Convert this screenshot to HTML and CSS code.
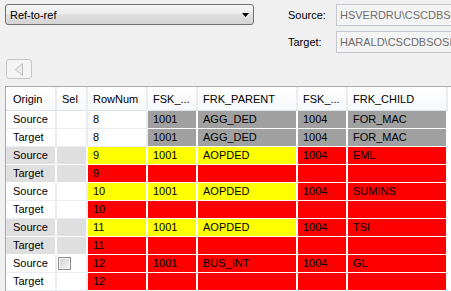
FILE: index.html
```html
<!DOCTYPE html>
<html lang="en">
  <head>
    <meta charset="UTF-8" />
    <title>Compare rows</title>
    <link rel="stylesheet" href="styles.css">
  </head>
  <body>
    <div class="form">
      <!-- Top bar -->
      <div class="top">
        <div class="left">
          <div class="combo">
            <span>Ref-to-ref</span>
            <svg class="arrow" width="7" height="4" viewBox="0 0 7 4"><polygon points="0,0 7,0 3.5,4" fill="#000" /></svg>
          </div>
          <button class="back" disabled>
            <svg width="10" height="13" viewBox="0 0 10 13"><polygon points="8.5,0.5 8.5,12.5 1.5,6.5" fill="#ececec" stroke="#bdbdbd" /></svg>
          </button>
        </div>
        <div class="conn">
          <div class="conn-row">
            <label>Source:</label>
            <div class="textbox">HSVERDRU\CSCDBSOSL</div>
          </div>
          <div class="conn-row">
            <label>Target:</label>
            <div class="textbox">HARALD\CSCDBSOSL</div>
          </div>
        </div>
      </div>

      <!-- Grid -->
      <div class="grid">
        <table>
          <colgroup>
            <col class="c-origin" />
            <col class="c-sel" />
            <col class="c-row" />
            <col class="c-fsk" />
            <col class="c-frk" />
            <col class="c-fsk" />
            <col class="c-frk" />
          </colgroup>
          <thead>
            <tr>
              <th class="origin">Origin</th>
              <th>Sel</th>
              <th>RowNum</th>
              <th>FSK_...</th>
              <th>FRK_PARENT</th>
              <th>FSK_...</th>
              <th>FRK_CHILD</th>
            </tr>
          </thead>
          <tbody>
            <tr>
              <td class="origin">Source</td><td></td><td>8</td>
              <td class="g">1001</td><td class="g">AGG_DED</td><td class="g">1004</td><td class="g">FOR_MAC</td>
            </tr>
            <tr>
              <td class="origin">Target</td><td></td><td>8</td>
              <td class="g">1001</td><td class="g">AGG_DED</td><td class="g">1004</td><td class="g">FOR_MAC</td>
            </tr>
            <tr>
              <td class="origin sh">Source</td><td class="sh"></td><td class="y">9</td>
              <td class="y">1001</td><td class="y">AOPDED</td><td class="r">1004</td><td class="r">EML</td>
            </tr>
            <tr>
              <td class="origin sh">Target</td><td class="sh"></td><td class="r">9</td>
              <td class="r"></td><td class="r"></td><td class="r"></td><td class="r"></td>
            </tr>
            <tr>
              <td class="origin">Source</td><td></td><td class="y">10</td>
              <td class="y">1001</td><td class="y">AOPDED</td><td class="r">1004</td><td class="r">SUMINS</td>
            </tr>
            <tr>
              <td class="origin">Target</td><td></td><td class="r">10</td>
              <td class="r"></td><td class="r"></td><td class="r"></td><td class="r"></td>
            </tr>
            <tr>
              <td class="origin sh">Source</td><td class="sh"></td><td class="y">11</td>
              <td class="y">1001</td><td class="y">AOPDED</td><td class="r">1004</td><td class="r">TSI</td>
            </tr>
            <tr>
              <td class="origin sh">Target</td><td class="sh"></td><td class="r">11</td>
              <td class="r"></td><td class="r"></td><td class="r"></td><td class="r"></td>
            </tr>
            <tr>
              <td class="origin">Source</td><td class="sel"><span class="check"></span></td><td class="r">12</td>
              <td class="r">1001</td><td class="r">BUS_INT</td><td class="r">1004</td><td class="r">GL</td>
            </tr>
            <tr>
              <td class="origin">Target</td><td></td><td class="r">12</td>
              <td class="r"></td><td class="r"></td><td class="r"></td><td class="r"></td>
            </tr>
          </tbody>
        </table>
      </div>
    </div>
  </body>
</html>
```

FILE: styles.css
```css
body {
  margin: 0;
  background-color: #f0f0f0;
  font-family: "Liberation Sans", Arial, sans-serif;
  font-size: 11px;
  color: #000;
  width: 451px;
  height: 291px;
  overflow: hidden;
}

.form {
  padding: 4px 0 0 5px;
}

.top {
  display: flex;
}

.left {
  width: 249px;
  flex-shrink: 0;
}

.combo {
  height: 21px;
  box-sizing: border-box;
  border: 1px solid #707070;
  border-radius: 3px;
  background: linear-gradient(#f4f4f4, #ececec 50%, #e0e0e0 50%, #d4d4d4);
  display: flex;
  align-items: center;
  padding: 0 4px;
}

.combo .arrow {
  margin-left: auto;
}

.back {
  display: flex;
  align-items: center;
  justify-content: center;
  width: 26px;
  height: 20px;
  margin: 34px 0 0 1px;
  padding: 0;
  border: 1px solid #c5c5c5;
  border-radius: 3px;
  background-color: #f4f4f4;
}

.conn {
  margin-left: 34px;
  display: flex;
  flex-direction: column;
  gap: 5px;
}

.conn-row {
  display: flex;
  align-items: center;
}

.conn-row label {
  width: 48px;
  flex-shrink: 0;
}

.textbox {
  width: 115px;
  height: 22px;
  box-sizing: border-box;
  border: 1px solid #c3c6ca;
  border-right: none;
  background-color: #f4f4f4;
  color: #6d6d6d;
  padding-left: 3px;
  line-height: 20px;
  white-space: nowrap;
  overflow: hidden;
}

.grid {
  margin-top: 7px;
  border: 1px solid #a9a9a9;
  border-right: none;
  border-bottom: none;
  background-color: #fff;
  width: 446px;
  height: 204px;
  overflow: hidden;
}

.grid table {
  border-collapse: separate;
  border-spacing: 0;
  table-layout: fixed;
  width: 442px;
}

.c-origin { width: 51px; }
.c-sel { width: 31px; }
.c-row { width: 60px; }
.c-fsk { width: 50px; }
.c-frk { width: 100px; }

.grid th,
.grid td {
  box-sizing: border-box;
  padding: 0 0 0 5px;
  text-align: left;
  font-weight: normal;
  white-space: nowrap;
  overflow: hidden;
  border-right: 2px solid #e9ecf3;
  border-bottom: 1px solid #e9ecf3;
}

.grid th {
  height: 24px;
  background: linear-gradient(#ffffff, #f7f8fa);
  border-right-color: #ececec;
  border-bottom-color: #e2e3e8;
}

.grid td {
  height: 18px;
  line-height: 17px;
}

.grid .origin {
  padding-left: 7px;
}

.grid .sh {
  background-color: #dfdfdf;
  border-color: #fff;
}

.grid .g {
  background-color: #a0a0a0;
  border-color: #fff;
}

.grid .y {
  background-color: #ffff00;
  border-color: #fff;
}

.grid .r {
  background-color: #ff0000;
  border-color: #fff;
}

.grid .sel {
  padding-left: 1px;
}

.check {
  display: block;
  width: 13px;
  height: 13px;
  box-sizing: border-box;
  border: 1px solid #8f8f8f;
  box-shadow: inset 0 0 0 1px #f4f4f4;
  background: linear-gradient(135deg, #cfcfcf, #f7f7f7);
}
```
